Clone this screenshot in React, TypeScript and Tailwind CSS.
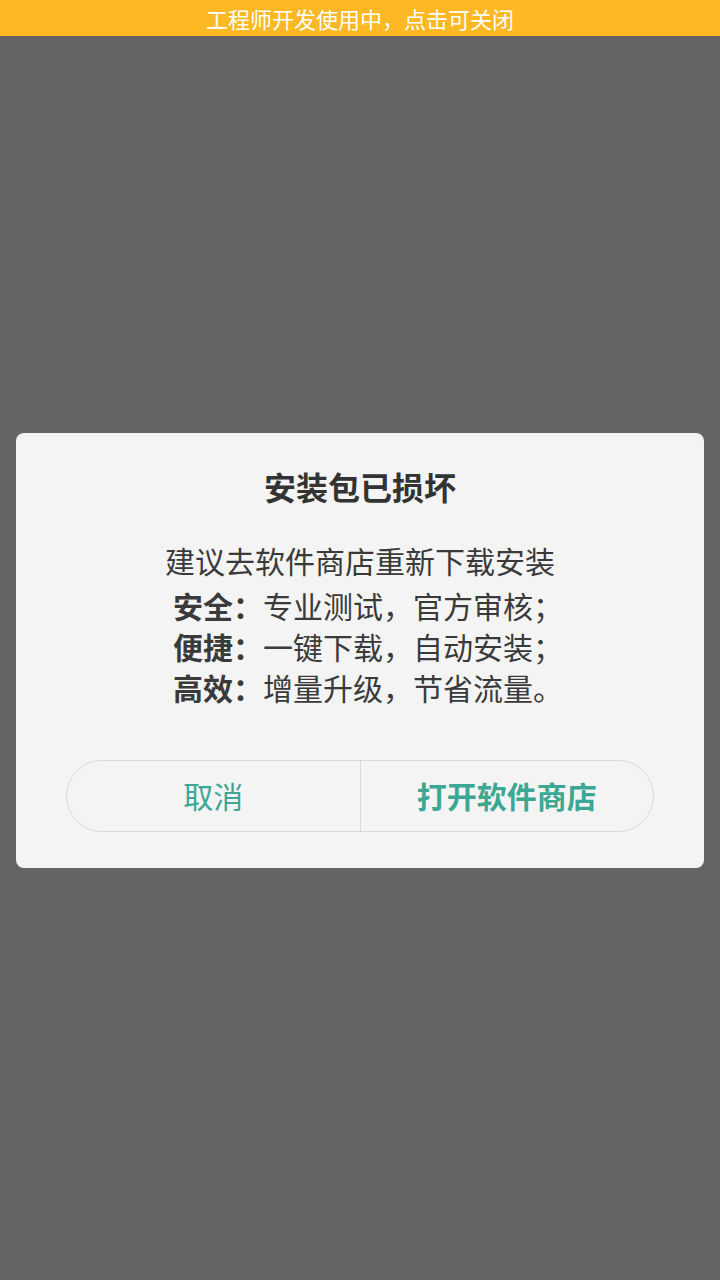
export default function App() {
  return (
    <div
      className="flex h-[1280px] w-[720px] flex-col bg-[#646464]"
      style={{ fontFamily: '"Noto Sans CJK SC", "Noto Sans", sans-serif' }}
    >
      <div className="flex h-[36px] items-center justify-center bg-[#fdb823] text-[22px] leading-none text-white">
        工程师开发使用中，点击可关闭
      </div>

      <div className="flex flex-1 items-center justify-center px-4 pb-[16px]">
        <div className="flex w-full flex-col items-center rounded-[8px] bg-[#f4f4f4] pt-[31px] pb-[36px]">
          <h1 className="text-[32px] font-bold leading-[44px] text-[#333333]">安装包已损坏</h1>

          <div className="mt-[31px] flex flex-col items-center text-[30px] leading-[41px] text-[#3a3a3a]">
            <p className="leading-[42px]">建议去软件商店重新下载安装</p>
            <p className="mt-[4px] pl-[16px]">
              <span className="font-bold">安全：</span>专业测试，官方审核；
            </p>
            <p className="pl-[16px]">
              <span className="font-bold">便捷：</span>一键下载，自动安装；
            </p>
            <p className="pl-[16px]">
              <span className="font-bold">高效：</span>增量升级，节省流量。
            </p>
          </div>

          <div className="mt-[52px] flex h-[72px] w-[588px] overflow-hidden rounded-full border border-[#d9d9d9]">
            <button className="flex flex-1 items-center justify-center border-r border-[#d9d9d9] text-[30px] text-[#3ba794]">
              取消
            </button>
            <button className="flex flex-1 items-center justify-center text-[30px] font-bold text-[#3ba794]">
              打开软件商店
            </button>
          </div>
        </div>
      </div>
    </div>
  )
}
